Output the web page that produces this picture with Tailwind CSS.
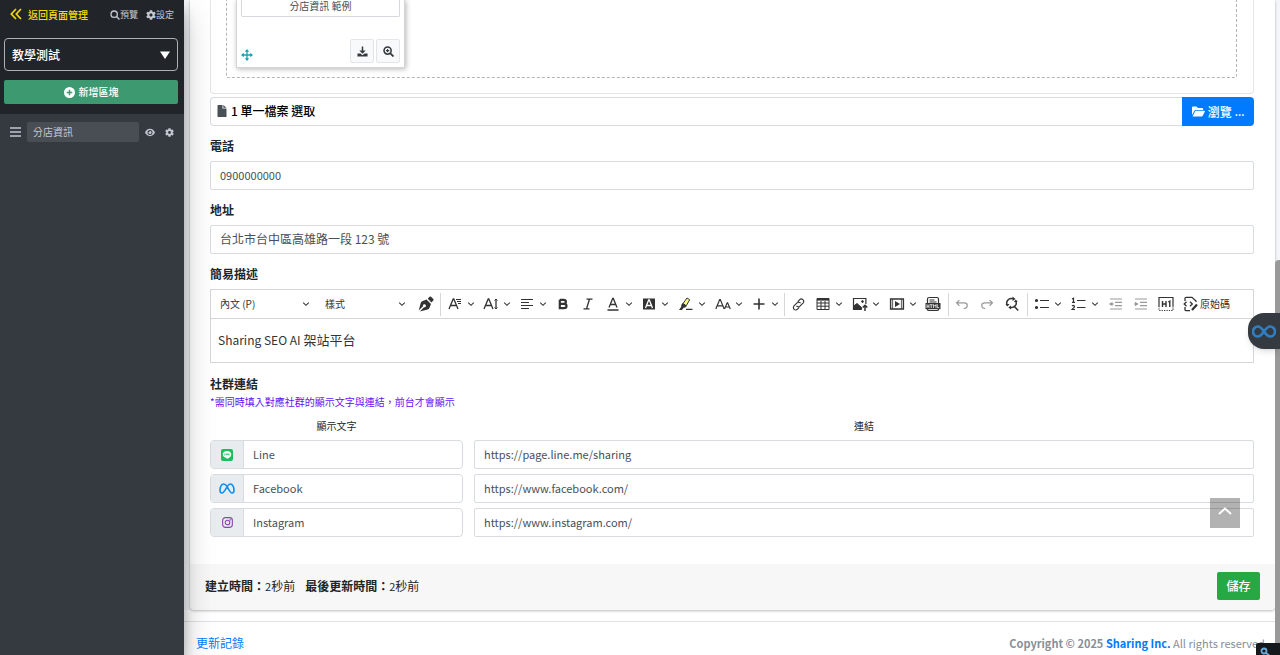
<!DOCTYPE html>
<html lang="zh-Hant">
<head>
<meta charset="utf-8">
<meta name="viewport" content="width=device-width, initial-scale=1">
<title>分店資訊</title>
<script src="https://cdn.jsdelivr.net/npm/@tailwindcss/browser@4"></script>
</head>
<body class="h-screen overflow-hidden bg-white font-['Noto_Sans_CJK_TC',sans-serif] text-xs text-[#212529]">
<svg class="hidden">
  <symbol id="chev" viewBox="0 0 10 10"><path d="M1.500 3.200 5 6.700l3.500-3.500" fill="none" stroke="currentColor" stroke-width="1.300"/></symbol>
  <symbol id="gear" viewBox="0 0 512 512"><path fill="currentColor" d="M487.400 315.700l-42.600-24.600c4.300-23.200 4.300-47 0-70.200l42.600-24.600c4.900-2.800 7.100-8.600 5.500-14-11.100-35.600-30-67.800-54.700-94.600-3.800-4.100-10-5.100-14.800-2.300L380.800 110c-17.900-15.400-38.500-27.300-60.800-35.100V25.800c0-5.600-3.900-10.500-9.400-11.700-36.700-8.200-74.300-7.800-109.200 0-5.500 1.200-9.400 6.100-9.400 11.700V75c-22.200 7.900-42.800 19.800-60.800 35.100L88.700 85.500c-4.900-2.800-11-1.900-14.800 2.300-24.700 26.700-43.600 58.900-54.700 94.600-1.700 5.400.6 11.200 5.500 14L67.300 221c-4.300 23.200-4.300 47 0 70.200l-42.600 24.600c-4.900 2.800-7.100 8.600-5.500 14 11.100 35.600 30 67.800 54.700 94.600 3.800 4.100 10 5.100 14.800 2.300l42.600-24.600c17.900 15.400 38.500 27.300 60.800 35.100v49.200c0 5.600 3.900 10.500 9.400 11.700 36.700 8.200 74.300 7.800 109.200 0 5.500-1.200 9.400-6.100 9.400-11.700v-49.200c22.200-7.900 42.800-19.800 60.800-35.100l42.600 24.600c4.900 2.800 11 1.900 14.800-2.300 24.700-26.700 43.600-58.900 54.700-94.600 1.500-5.500-.7-11.300-5.600-14.100zM256 336c-44.100 0-80-35.900-80-80s35.900-80 80-80 80 35.900 80 80-35.900 80-80 80z"/></symbol>
</svg>
<div class="flex h-full">
  <aside class="relative z-10 w-[184px] shrink-0 bg-[#343a40] shadow-[0_14px_28px_rgba(0,0,0,.25),0_10px_10px_rgba(0,0,0,.22)]">
    <div class="h-[114px] bg-[#212529] pl-1 pr-1.5">
      <nav class="flex h-[29px] items-center text-[9px] text-[#c2c7d0]">
        <a href="#" class="flex items-center gap-1.5 pl-1.5 text-[10px] font-medium text-[#f5d90a]">
          <svg class="size-3" viewBox="0 0 12 12" fill="none" stroke="currentColor" stroke-width="1.700"><path d="M6 1 1.300 6 6 11M11 1 6.300 6 11 11"/></svg>返回頁面管理</a>
        <a href="#" class="ml-auto flex items-center"><svg class="size-2.5" viewBox="0 0 12 12" fill="none" stroke="currentColor" stroke-width="1.600"><circle cx="5" cy="5" r="3.800"/><path d="m7.800 7.800 3.600 3.600"/></svg>預覽</a>
        <a href="#" class="ml-2 mr-1 flex items-center"><svg class="size-2.5"><use href="#gear"/></svg>設定</a>
      </nav>
      <div class="mt-[9px] grid items-center">
        <select aria-label="頁面" class="col-start-1 row-start-1 h-[33px] w-full appearance-none rounded border border-[#adb1b5] bg-[#212529] px-[7px] text-xs font-medium text-white"><option>教學測試</option></select>
        <svg class="pointer-events-none col-start-1 row-start-1 mr-2 h-2 w-2.5 justify-self-end fill-white" viewBox="0 0 10 8"><path d="M0 .5h10L5 8z"/></svg>
      </div>
      <button class="mt-[9px] flex h-6 w-full items-center justify-center gap-1 rounded-xs bg-[#3d9970] text-[10px] font-medium text-white">
        <svg class="size-[11px]" viewBox="0 0 12 12"><circle cx="6" cy="6" r="6" fill="#fff"/><path d="M6 3v6M3 6h6" stroke="#3d9970" stroke-width="1.600"/></svg>新增區塊</button>
    </div>
    <div class="flex h-9 items-center pl-2.5 text-[#c2c7d0]">
      <svg class="h-3 w-[11px]" viewBox="0 0 11 12" stroke="currentColor" stroke-width="1.500"><path d="M0 2h11M0 6h11M0 10h11"/></svg>
      <input aria-label="區塊名稱" value="分店資訊" class="ml-1.5 h-5 w-28 rounded-xs bg-[#494e54] px-1.5 pb-0.5 text-[10px] text-[#c2c7d0]">
      <button aria-label="顯示" class="ml-1.5"><svg class="h-[9px] w-[10px]" viewBox="0 0 22 18"><path fill="currentColor" fill-rule="evenodd" d="M11 1C6 1 2 4.500 0 9c2 4.500 6 8 11 8s9-3.500 11-8c-2-4.500-6-8-11-8Zm0 2.500a5.500 5.500 0 1 1 0 11 5.500 5.500 0 0 1 0-11Zm0 2a3.500 3.500 0 1 1-3.300 2.400A1.900 1.900 0 0 0 10 5.700Z"/></svg></button>
      <button aria-label="區塊設定" class="ml-2.5"><svg class="size-[9px]"><use href="#gear"/></svg></button>
    </div>
  </aside>

  <div class="flex min-w-0 flex-1 flex-col">
    <main class="bg-[#f4f6f9] pl-1.5 pr-[5px]">
      <form class="rounded-b bg-white shadow-[0_0_1px_rgba(0,0,0,.2),0_1px_3px_rgba(0,0,0,.25)]">
        <div class="pb-[27px] pl-5 pr-[21px]">
          <section class="rounded-b border border-t-0 border-[#e3e6e8] pb-[15px] pl-[15px] pr-4">
            <div class="rounded-b-xs border border-t-0 border-dashed border-[#b5b5b5] px-[9px] pb-[9px]">
              <div class="w-[169px] border border-t-0 border-[#d5d5d5] px-1 pb-1 shadow-[1px_1px_5px_#b5b2b2]">
                <p class="h-[17px] rounded-b-xs border border-t-0 border-[#d5d9dd] text-center text-[10px] leading-3 text-[#4a4f55]">分店資訊 範例</p>
                <div class="mt-[22px] flex gap-0.5 text-[#343a40]">
                  <svg class="mr-auto mt-2.5 size-3 text-[#17a2b8]" viewBox="0 0 12 12"><path d="M6 1v10M1 6h10" stroke="currentColor" stroke-width="1.300"/><path fill="currentColor" d="m6 0 2.200 2.800H3.800ZM6 12 3.800 9.200h4.400ZM0 6l2.800-2.200v4.400ZM12 6 9.200 8.200V3.800Z"/></svg>
                  <button type="button" aria-label="下載" class="grid h-6 w-6 place-items-center rounded-xs border border-[#e3e6e8] bg-[#f8f9fa]"><svg class="size-[11px]" viewBox="0 0 12 12"><path fill="currentColor" d="M5.200.5h1.600V5H9.500L6 8.500 2.500 5h2.700ZM.5 8.200h3.300L6 10l2.200-1.800h3.300v3.300H.5Z"/></svg></button>
                  <button type="button" aria-label="放大" class="grid h-6 w-6 place-items-center rounded-xs border border-[#e3e6e8] bg-[#f8f9fa]"><svg class="size-[11px]" viewBox="0 0 12 12" fill="none" stroke="currentColor"><circle cx="5" cy="5" r="3.900" stroke-width="1.700"/><path stroke-width="2" d="m8 8 3.400 3.400"/><path stroke-width="1.300" d="M5 3.200v3.600M3.200 5h3.600"/></svg></button>
                </div>
              </div>
            </div>
          </section>
          <div class="mt-[3px] flex h-[29px]">
            <div class="flex flex-1 items-center gap-1 rounded-l border border-r-0 border-[#d8dce0] pl-1.5 pb-px font-medium text-black">
              <svg class="h-3 w-[10px] fill-[#495057]" viewBox="0 0 9 12"><path d="M0 .6Q0 0 .6 0H5v3.400h4v8q0 .6-.6.6H.6Q0 12 0 11.400ZM5.800 0 9 2.800H5.800Z"/></svg>1 單一檔案 選取</div>
            <button type="button" class="flex w-[72px] items-center justify-center gap-[3px] rounded-r bg-[#007bff] font-medium text-white"><svg class="h-[11px] w-[13px] fill-white" viewBox="0 0 13 11"><path d="M0 9V1.500Q0 .5 1 .5h3.500L6 2h4.200q.9 0 .9 1v1H3.600q-.8 0-1.200.7ZM.5 10.500 3 5.500q.3-.7 1-.7h8.400q.8 0 .5.700l-2.200 4.300q-.4.700-1 .7Z"/></svg>瀏覽 <span class="font-['Noto_Sans',sans-serif]">…</span></button>
          </div>

          <label for="tel" class="mt-[10px] mb-[5px] block h-5 font-bold leading-5">電話</label>
          <input id="tel" value="0900000000" class="block h-[29px] w-full rounded-xs border border-[#d8dce0] px-[9px] pb-0.5 text-[11px] text-[#495057]">
          <label for="addr" class="mt-[10px] mb-[5px] block h-5 font-bold leading-5">地址</label>
          <input id="addr" value="台北市台中區高雄路一段 123 號" class="block h-[29px] w-full rounded-xs border border-[#d8dce0] px-[9px] pb-0.5 text-xs text-[#495057]">
          <p class="mt-[10px] mb-[5px] h-5 font-bold leading-5">簡易描述</p>

          <div class="border border-[#d4d6d8] text-[#333]">
            <div role="toolbar" class="flex h-[29px] items-center overflow-hidden border-b border-[#d4d6d8] text-[10px]">
              <div class="grid w-[105px] items-center">
                <select aria-label="段落" class="col-start-1 row-start-1 w-full appearance-none pl-[9px] text-[10px]"><option>內文 (P)</option></select>
                <svg class="pointer-events-none col-start-1 row-start-1 mr-1.5 size-2 justify-self-end"><use href="#chev"/></svg>
              </div>
              <div class="grid w-[96px] items-center">
                <select aria-label="樣式" class="col-start-1 row-start-1 w-full appearance-none pl-[9px] text-[10px]"><option>樣式</option></select>
                <svg class="pointer-events-none col-start-1 row-start-1 mr-1.5 size-2 justify-self-end"><use href="#chev"/></svg>
              </div>
              <button type="button" aria-label="格式" class="ml-0.5 grid w-6 place-items-center"><svg class="size-4" viewBox="0 0 16 16" fill="currentColor"><path fill-rule="evenodd" d="M8.500 3.500 13 8l-1.600 3.900Q11 13 9.600 13.500L1.800 15.400 6 11.200a1.500 1.500 0 1 0-1-1L.7 14.400 2.700 7Q3 5.700 4.200 5.200Z"/><path d="m9.800 2.700 1.800-1.900q.7-.8 1.500 0l2.200 2.200q.7.800 0 1.500l-1.900 1.900Z"/></svg></button>
              <i class="ml-0.5 mr-0.5 h-[23px] w-px bg-[#d4d6d8]"></i>
              <button type="button" aria-label="字型" class="mr-1 flex w-8 items-center"><svg class="ml-1 mr-1 size-4 shrink-0" viewBox="0 0 16 16" fill="none" stroke="currentColor" stroke-width="1.300"><path d="M2 13 6.200 3h.6L11 13M3.500 9.500h6"/><path stroke-width="1" d="M9 3.500h5M10 5.500h4M11 7.500h3"/></svg><svg class="size-2 shrink-0"><use href="#chev"/></svg></button>
              <button type="button" aria-label="字型大小" class="mr-1 flex w-8 items-center"><svg class="ml-1 mr-1 size-4 shrink-0" viewBox="0 0 16 16" fill="none" stroke="currentColor" stroke-width="1.300"><path d="M1 13 5.200 3h.6L10 13M2.500 9.500h6M13 3v10"/><path stroke-width="1" d="m11.500 4.500 1.500-1.500 1.500 1.500M11.500 11.500 13 13l1.500-1.500"/></svg><svg class="size-2 shrink-0"><use href="#chev"/></svg></button>
              <button type="button" aria-label="對齊" class="mr-1 flex w-8 items-center"><svg class="ml-1 mr-1 size-4 shrink-0" viewBox="0 0 16 16" stroke="currentColor" stroke-width="1.200"><path d="M2 3.500h12M2 6.500h8M2 9.500h12M2 12.500h8"/></svg><svg class="size-2 shrink-0"><use href="#chev"/></svg></button>
              <button type="button" aria-label="粗體" class="mr-px grid w-6 place-items-center"><svg class="size-4" viewBox="0 0 16 16" fill="none" stroke="currentColor" stroke-width="2.200"><path d="M4.800 3.800h3.900q2.200 0 2.200 2T8.700 7.800H4.800M4.800 7.800h4.200q2.500 0 2.500 2.200t-2.500 2.200H4.800V3.800"/></svg></button>
              <button type="button" aria-label="斜體" class="mr-px grid w-6 place-items-center"><svg class="size-4" viewBox="0 0 16 16" fill="none" stroke="currentColor" stroke-width="1.300"><path d="M6.500 3.200h6M3.500 12.800h6M9.500 3.200 6.500 12.800"/></svg></button>
              <button type="button" aria-label="字型顏色" class="mr-1 flex w-8 items-center"><svg class="ml-1 mr-1 size-4 shrink-0" viewBox="0 0 16 16" fill="none" stroke="currentColor" stroke-width="1.300"><path d="M4 11.500 7.700 2.500h.6l3.700 9M5.300 8.500h5.400M2.500 14h11"/></svg><svg class="size-2 shrink-0"><use href="#chev"/></svg></button>
              <button type="button" aria-label="字型背景色" class="mr-[5px] flex w-8 items-center"><svg class="ml-1 mr-1 size-4 shrink-0" viewBox="0 0 16 16" fill="none"><path fill="currentColor" d="M2 2.500h12v11H2z"/><path stroke="#fff" stroke-width="1.300" d="m4.500 12 3.200-8h.6l3.200 8M5.700 9.500h4.600"/></svg><svg class="size-2 shrink-0"><use href="#chev"/></svg></button>
              <button type="button" aria-label="螢光標記" class="mr-[5px] flex w-8 items-center"><svg class="ml-1 mr-1 size-4 shrink-0" viewBox="0 0 16 16"><path fill="#fdfd77" stroke="#333" d="m5 7.500 4-5.500 2.700 1.800-3.500 6Z"/><path fill="#333" d="m4.500 7 4.200 2.900-1.500 1.600-1.600.3L4 14H1l2.200-3.200.2-2ZM8 12.700h6.500v1.300H8z"/></svg><svg class="size-2 shrink-0"><use href="#chev"/></svg></button>
              <button type="button" aria-label="大小寫" class="mr-1 flex w-8 items-center"><svg class="ml-1 mr-1 size-4 shrink-0" viewBox="0 0 16 16" fill="none" stroke="currentColor" stroke-width="1.200"><path d="M.8 13 4.700 3.500h.6L9.200 13M2.200 9.800h5.600M9.500 13l2.700-6.200h.4l2.700 6.200M10.500 11h3.800"/></svg><svg class="size-2 shrink-0"><use href="#chev"/></svg></button>
              <button type="button" aria-label="插入" class="flex w-8 items-center"><svg class="ml-1 mr-1 size-4 shrink-0" viewBox="0 0 16 16" stroke="currentColor" stroke-width="1.600"><path d="M8 2.500v11M2.500 8h11"/></svg><svg class="size-2 shrink-0"><use href="#chev"/></svg></button>
              <i class="ml-[5px] mr-px h-[23px] w-px bg-[#d4d6d8]"></i>
              <button type="button" aria-label="連結" class="mr-px grid w-6 place-items-center"><svg class="size-[13px]" viewBox="0 0 16 16" fill="none" stroke="currentColor" stroke-width="1.400"><path d="m7 4.500 2.200-2.300a2.900 2.900 0 0 1 4.300 4L9.800 10a2.900 2.900 0 0 1-4.300-.3M9 11.500l-2.200 2.300a2.900 2.900 0 0 1-4.300-4L6.200 6a2.900 2.900 0 0 1 4.300.3"/></svg></button>
              <button type="button" aria-label="表格" class="mr-[5px] flex w-8 items-center"><svg class="ml-1 mr-1 size-4 shrink-0" viewBox="0 0 16 16" fill="none" stroke="currentColor"><path d="M2 2.500h12v11H2zM2 7h12M2 10.200h12M6 5v8.500M10 5v8.500"/><path stroke-width="2.200" d="M2 3.500h12"/></svg><svg class="size-2 shrink-0"><use href="#chev"/></svg></button>
              <button type="button" aria-label="圖片" class="mr-[5px] flex w-8 items-center"><svg class="ml-1 mr-1 size-4 shrink-0" viewBox="0 0 16 16" fill="none" stroke="currentColor"><path stroke-width="1.200" d="M9 13.500H1.500v-11h12.400V8"/><path fill="currentColor" d="m1.500 13.500.5-3.700 3-2.300 4.500 4v2Z"/><circle cx="10.500" cy="5.500" r=".9" fill="currentColor"/><path stroke-width="1.500" d="M13 15V9.500M10.700 11.500 13 9.200l2.300 2.300"/></svg><svg class="size-2 shrink-0"><use href="#chev"/></svg></button>
              <button type="button" aria-label="媒體" class="mr-1 flex w-8 items-center"><svg class="ml-1 mr-1 size-4 shrink-0" viewBox="0 0 16 16"><path fill="none" stroke="currentColor" stroke-width="1.400" d="M1.600 3h12.800v10H1.600z"/><path fill="none" stroke="currentColor" stroke-width=".8" d="M3.600 3v10M12.400 3v10"/><path fill="currentColor" d="m6 5 5 3-5 3Z"/></svg><svg class="size-2 shrink-0"><use href="#chev"/></svg></button>
              <button type="button" aria-label="HTML" class="grid w-6 place-items-center"><svg class="size-4" viewBox="0 0 16 16"><path fill="none" stroke="currentColor" stroke-width="1.200" d="M2.500 7V3q0-1.500 1.500-1.500h8q1.500 0 1.500 1.500v4M4.500 4h5M4.500 6h7M2.500 13v.5q0 1 1.500 1h8q1.500 0 1.500-1V13"/><path fill="currentColor" d="M.5 7h15v6.200H.5z"/><path fill="none" stroke="#fff" stroke-width=".8" d="M2 8.300V12M4 8.300V12M2 10.200h2M5 8.700h2.500M6.200 8.700V12M8.400 12V8.500l1.300 1.700L11 8.500V12M12.300 8.300v3.300h1.900"/></svg></button>
              <i class="ml-[3px] mr-px h-[23px] w-px bg-[#d4d6d8]"></i>
              <button type="button" aria-label="復原" class="mr-px grid w-6 place-items-center text-[#999]"><svg class="size-[14px]" viewBox="0 0 16 16" fill="none" stroke="currentColor" stroke-width="1.400"><path d="M5 3.500 1.800 6.700 5 10M2 6.700h8.500q3.500 0 3.500 3 0 3.300-4 3.500"/></svg></button>
              <button type="button" aria-label="重做" class="mr-px grid w-6 place-items-center text-[#999]"><svg class="size-[14px]" viewBox="0 0 16 16" fill="none" stroke="currentColor" stroke-width="1.400"><path d="m11 3.500 3.200 3.200L11 10M14 6.700H5.500q-3.500 0-3.500 3 0 3.300 4 3.500"/></svg></button>
              <button type="button" aria-label="尋找與取代" class="grid w-6 place-items-center"><svg class="size-4" viewBox="0 0 16 16" fill="none" stroke="currentColor" stroke-width="1.500"><path d="M3.500 9.500A4.500 4.500 0 0 1 8.800 2.800M11.700 5A4.500 4.500 0 0 1 6.500 11.400M9.700 9.700l4.500 4.800"/><path fill="currentColor" stroke="none" d="m8.500.5 3 2.400-3 2ZM7 9.500v4L4.300 11.600ZM1.500 8h4L3.500 10.500ZM9.800 6h4L11.800 3.500Z"/></svg></button>
              <i class="ml-[3px] mr-0.5 h-[23px] w-px bg-[#d4d6d8]"></i>
              <button type="button" aria-label="項目清單" class="mr-[5px] flex w-8 items-center"><svg class="ml-1 mr-1 size-4 shrink-0" viewBox="0 0 16 16" stroke="currentColor" stroke-width="1.200"><path d="M6 4.500h9M6 11.500h9"/><circle cx="2.500" cy="4.500" r="1" fill="currentColor"/><circle cx="2.500" cy="11.500" r="1" fill="currentColor"/></svg><svg class="size-2 shrink-0"><use href="#chev"/></svg></button>
              <button type="button" aria-label="編號清單" class="mr-[5px] flex w-8 items-center"><svg class="ml-1 mr-1 size-4 shrink-0" viewBox="0 0 16 16" fill="none" stroke="currentColor" stroke-width="1.200"><path d="M6 4.500h8.500M6 11.500h8.500M1 3l1.500-.8v4M1 6.300h3M1 10q1.200-1 2.200-.2.700.9-.4 1.900L1 13.500h3"/></svg><svg class="size-2 shrink-0"><use href="#chev"/></svg></button>
              <button type="button" aria-label="減少縮排" class="mr-px grid w-6 place-items-center text-[#999]"><svg class="size-4" viewBox="0 0 16 16" fill="none" stroke="currentColor" stroke-width="1.200"><path d="M2 3h12M7 6.300h7M7 9.700h7M2 13h12M1.500 8H6"/><path fill="currentColor" stroke="none" d="M4.500 5.700v4.600L1 8Z"/></svg></button>
              <button type="button" aria-label="增加縮排" class="mr-px grid w-6 place-items-center text-[#999]"><svg class="size-4" viewBox="0 0 16 16" fill="none" stroke="currentColor" stroke-width="1.200"><path d="M2 3h12M7 6.300h7M7 9.700h7M2 13h12M1 8h4"/><path fill="currentColor" stroke="none" d="M2 5.700v4.600L5.500 8Z"/></svg></button>
              <button type="button" aria-label="顯示區塊" class="mr-px grid w-6 place-items-center"><svg class="size-4" viewBox="0 0 16 16" fill="none" stroke="currentColor" stroke-width="1.200"><path d="M1 10V1.500h14V10"/><path stroke-dasharray="1.200 1.200" d="M1 10v4.500h14V10"/><path stroke-width="1.400" d="M4.500 5v6M8 5v6M4.500 8H8M10.300 6l1.500-.8V11"/></svg></button>
              <button type="button" class="flex items-center"><svg class="ml-1 size-4 shrink-0" viewBox="0 0 16 16" fill="none" stroke="currentColor" stroke-width="1.300"><path d="M2 5V2.500Q2 1.300 3.200 1.300H9L13 5v1M2 11v2.500q0 1.200 1.200 1.200H7M3.500 5.800 1.200 8l2.300 2.200M7 5.800 9.300 8 7 10.200"/><path stroke-width="2.200" d="m9 14 5-5.500"/></svg><span class="ml-px">原始碼</span></button>
            </div>
            <div contenteditable="true" aria-label="簡易描述" class="h-[43px] px-[7px] text-[13px] leading-[41px]"><span class="text-xs">Sharing SEO AI</span> 架站平台</div>
          </div>

          <p class="mt-[11px] h-5 font-bold leading-5">社群連結</p>
          <p class="h-4 text-[10px] leading-4 text-[#6610f2]">*需同時填入對應社群的顯示文字與連結，前台才會顯示</p>
          <div class="mt-2 grid grid-cols-[253fr_780fr] gap-x-[11px] gap-y-[5px]">
            <span class="h-[17px] text-center text-[10px] leading-4">顯示文字</span>
            <span class="h-[17px] text-center text-[10px] leading-4">連結</span>
            <div class="flex h-[29px] overflow-hidden rounded border border-[#d8dce0]">
              <span class="grid w-[33px] place-items-center border-r border-[#d8dce0] bg-[#e9ecef]"><svg class="size-3" viewBox="0 0 12 12"><rect width="12" height="12" rx="2" fill="#1cbf5b"/><path fill="#fff" d="M6 2C3.600 2 1.700 3.500 1.700 5.400S3.400 8.600 5.500 8.800l.2 1.300C8 9 10.300 7.300 10.300 5.400 10.300 3.500 8.400 2 6 2Z"/><path stroke="#1cbf5b" stroke-width=".6" fill="none" d="M3.300 4.500v1.600h.8M4.800 4.500v1.600M5.500 6.100V4.600l1 1.400V4.500M8.600 4.700h-1v1.400h1M7.600 5.400h.9"/></svg></span>
              <input aria-label="Line 顯示文字" value="Line" class="min-w-0 flex-1 px-[9px] text-[11px] text-[#495057]">
            </div>
            <input aria-label="Line 連結" value="https://page.line.me/sharing" class="h-[29px] rounded-xs border border-[#d8dce0] px-[9px] pb-0.5 text-[11px] text-[#495057]">
            <div class="flex h-[29px] overflow-hidden rounded border border-[#d8dce0]">
              <span class="grid w-[33px] place-items-center border-r border-[#d8dce0] bg-[#e9ecef]"><svg class="h-[11px] w-4" viewBox="0 0 16 11" fill="none" stroke="#1090f0" stroke-width="1.600"><path d="M8 3.300C6.800 1.600 5.700 1 4.600 1 2.500 1 1 4.200 1 7.200 1 9 1.800 10 3 10c1.300 0 2.300-1.300 5-6.200C9.300 1.700 10.300 1 11.400 1 13.500 1 15 4.200 15 7.200c0 1.800-.8 2.800-2 2.800-1.400 0-2.300-1.500-5-6.700"/></svg></span>
              <input aria-label="Facebook 顯示文字" value="Facebook" class="min-w-0 flex-1 px-[9px] text-[11px] text-[#495057]">
            </div>
            <input aria-label="Facebook 連結" value="https://www.facebook.com/" class="h-[29px] rounded-xs border border-[#d8dce0] px-[9px] pb-0.5 text-[11px] text-[#495057]">
            <div class="flex h-[29px] overflow-hidden rounded border border-[#d8dce0]">
              <span class="grid w-[33px] place-items-center border-r border-[#d8dce0] bg-[#e9ecef]"><svg class="size-[11px]" viewBox="0 0 12 12" fill="none" stroke="#8e44ad" stroke-width="1.200"><rect x=".7" y=".7" width="10.600" height="10.600" rx="3"/><circle cx="6" cy="6" r="2.500"/><circle cx="9" cy="3" r=".3"/></svg></span>
              <input aria-label="Instagram 顯示文字" value="Instagram" class="min-w-0 flex-1 px-[9px] text-[11px] text-[#495057]">
            </div>
            <input aria-label="Instagram 連結" value="https://www.instagram.com/" class="h-[29px] rounded-xs border border-[#d8dce0] px-[9px] pb-0.5 text-[11px] text-[#495057]">
          </div>
        </div>
        <div class="flex h-[46px] items-center rounded-b bg-[#f7f7f7] px-[15px] pb-0.5">
          <p><b>建立時間：</b><span class="text-[11px]">2</span>秒前</p>
          <p class="ml-[10px]"><b>最後更新時間：</b><span class="text-[11px]">2</span>秒前</p>
          <button class="ml-auto h-7 w-[43px] rounded-xs bg-[#28a745] font-medium text-white">儲存</button>
        </div>
      </form>
    </main>
    <footer class="mt-[11px] flex flex-1 items-start justify-between border-t border-[#dee2e6] bg-white px-3 pt-[11px] leading-5 text-[#869099]">
      <a href="#" class="text-[#007bff]">更新記錄</a>
      <p class="text-[11px]"><b>Copyright © 2025 <a href="#" class="text-[#007bff]">Sharing Inc.</a></b> All rights reserved.</p>
    </footer>
  </div>
</div>
<div class="fixed bottom-0 right-0 top-[260px] z-20 w-[5px] rounded-tl-sm bg-[#999]"></div>
<button aria-label="回到頂端" class="fixed bottom-[127px] right-10 z-20 grid size-[30px] place-items-center bg-black/30 pb-1"><svg class="h-2 w-[14px]" viewBox="0 0 14 8" fill="none" stroke="#fff" stroke-width="2"><path d="m1 7 6-5.500L13 7"/></svg></button>
<button aria-label="助手" class="fixed right-0 top-[313px] z-30 grid h-9 w-8 place-items-center rounded-l-2xl bg-[#343a40] shadow-md"><svg class="h-[13px] w-6" viewBox="0 0 24 13" fill="none" stroke="#2f7fc4" stroke-width="2.600"><path d="M12 6.500C9.500 3 8 1.500 6 1.500a5 5 0 0 0 0 10c2 0 3.500-1.500 6-5s4-5 6-5a5 5 0 0 1 0 10c-2 0-3.500-1.500-6-5Z"/></svg></button>
<button aria-label="工具" class="fixed bottom-0 right-0 z-30 h-3 w-6 overflow-hidden rounded-tl-xs bg-[#16191c] pl-1 pt-1"><svg class="size-3" viewBox="0 0 12 12" fill="none" stroke="#6ea8d8" stroke-width="1.800"><circle cx="4" cy="4" r="2.500"/><path d="m5.500 5.500 5 4"/></svg></button>
</body>
</html>
